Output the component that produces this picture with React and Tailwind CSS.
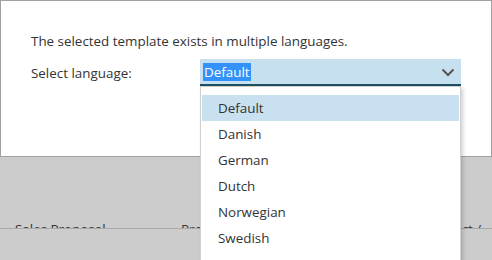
import React from 'react';

const languages = ['Default', 'Danish', 'German', 'Dutch', 'Norwegian', 'Swedish'];

const App = () => {
  return (
    <div className="relative w-[492px] h-[260px] overflow-hidden bg-[#cccccc] text-[13.4px] text-[#333333] font-['Open_Sans',sans-serif]">
      <div className="h-[157px] bg-white border border-[#a0a0a0] pl-[30px] pt-[31px]">
        <p className="leading-[18px]">The selected template exists in multiple languages.</p>
        <div className="flex items-center mt-[9px]">
          <div className="w-[169px] leading-[18px]">Select language:</div>
          <div className="w-[261px] h-[27px] bg-[#c6e0f0] border-b-2 border-[#1e4f63] flex items-center justify-between pl-[3px] pr-[6px]">
            <span className="bg-[#3391fa] text-white leading-[18px] px-[1px]">Default</span>
            <svg width="14" height="9" viewBox="0 0 14 9" className="mt-[1px]">
              <polyline points="1.5,1.5 7,7 12.5,1.5" fill="none" stroke="#555555" strokeWidth="2" />
            </svg>
          </div>
        </div>
      </div>

      <div className="h-[72px] overflow-hidden border-b border-[#aaaaaa]">
        <div className="flex pl-[15px] pt-[63px] leading-[18px] whitespace-nowrap">
          <div className="w-[166px] shrink-0">Sales Proposal</div>
          <div className="w-[246px] shrink-0">Product</div>
          <div className="shrink-0">Subject /</div>
        </div>
      </div>

      <div className="absolute left-[200px] top-[86px] w-[261px] h-[200px] bg-white border border-[#d0d0d0] shadow-[2px_2px_4px_rgba(0,0,0,0.18)] pt-[8px]">
        {languages.map((lang, i) => (
          <div
            key={lang}
            className={`h-[26px] flex items-center pl-[16px] mx-[1px] ${i === 0 ? 'bg-[#c8e0f0]' : ''}`}
          >
            {lang}
          </div>
        ))}
      </div>
    </div>
  );
};

export default App;
